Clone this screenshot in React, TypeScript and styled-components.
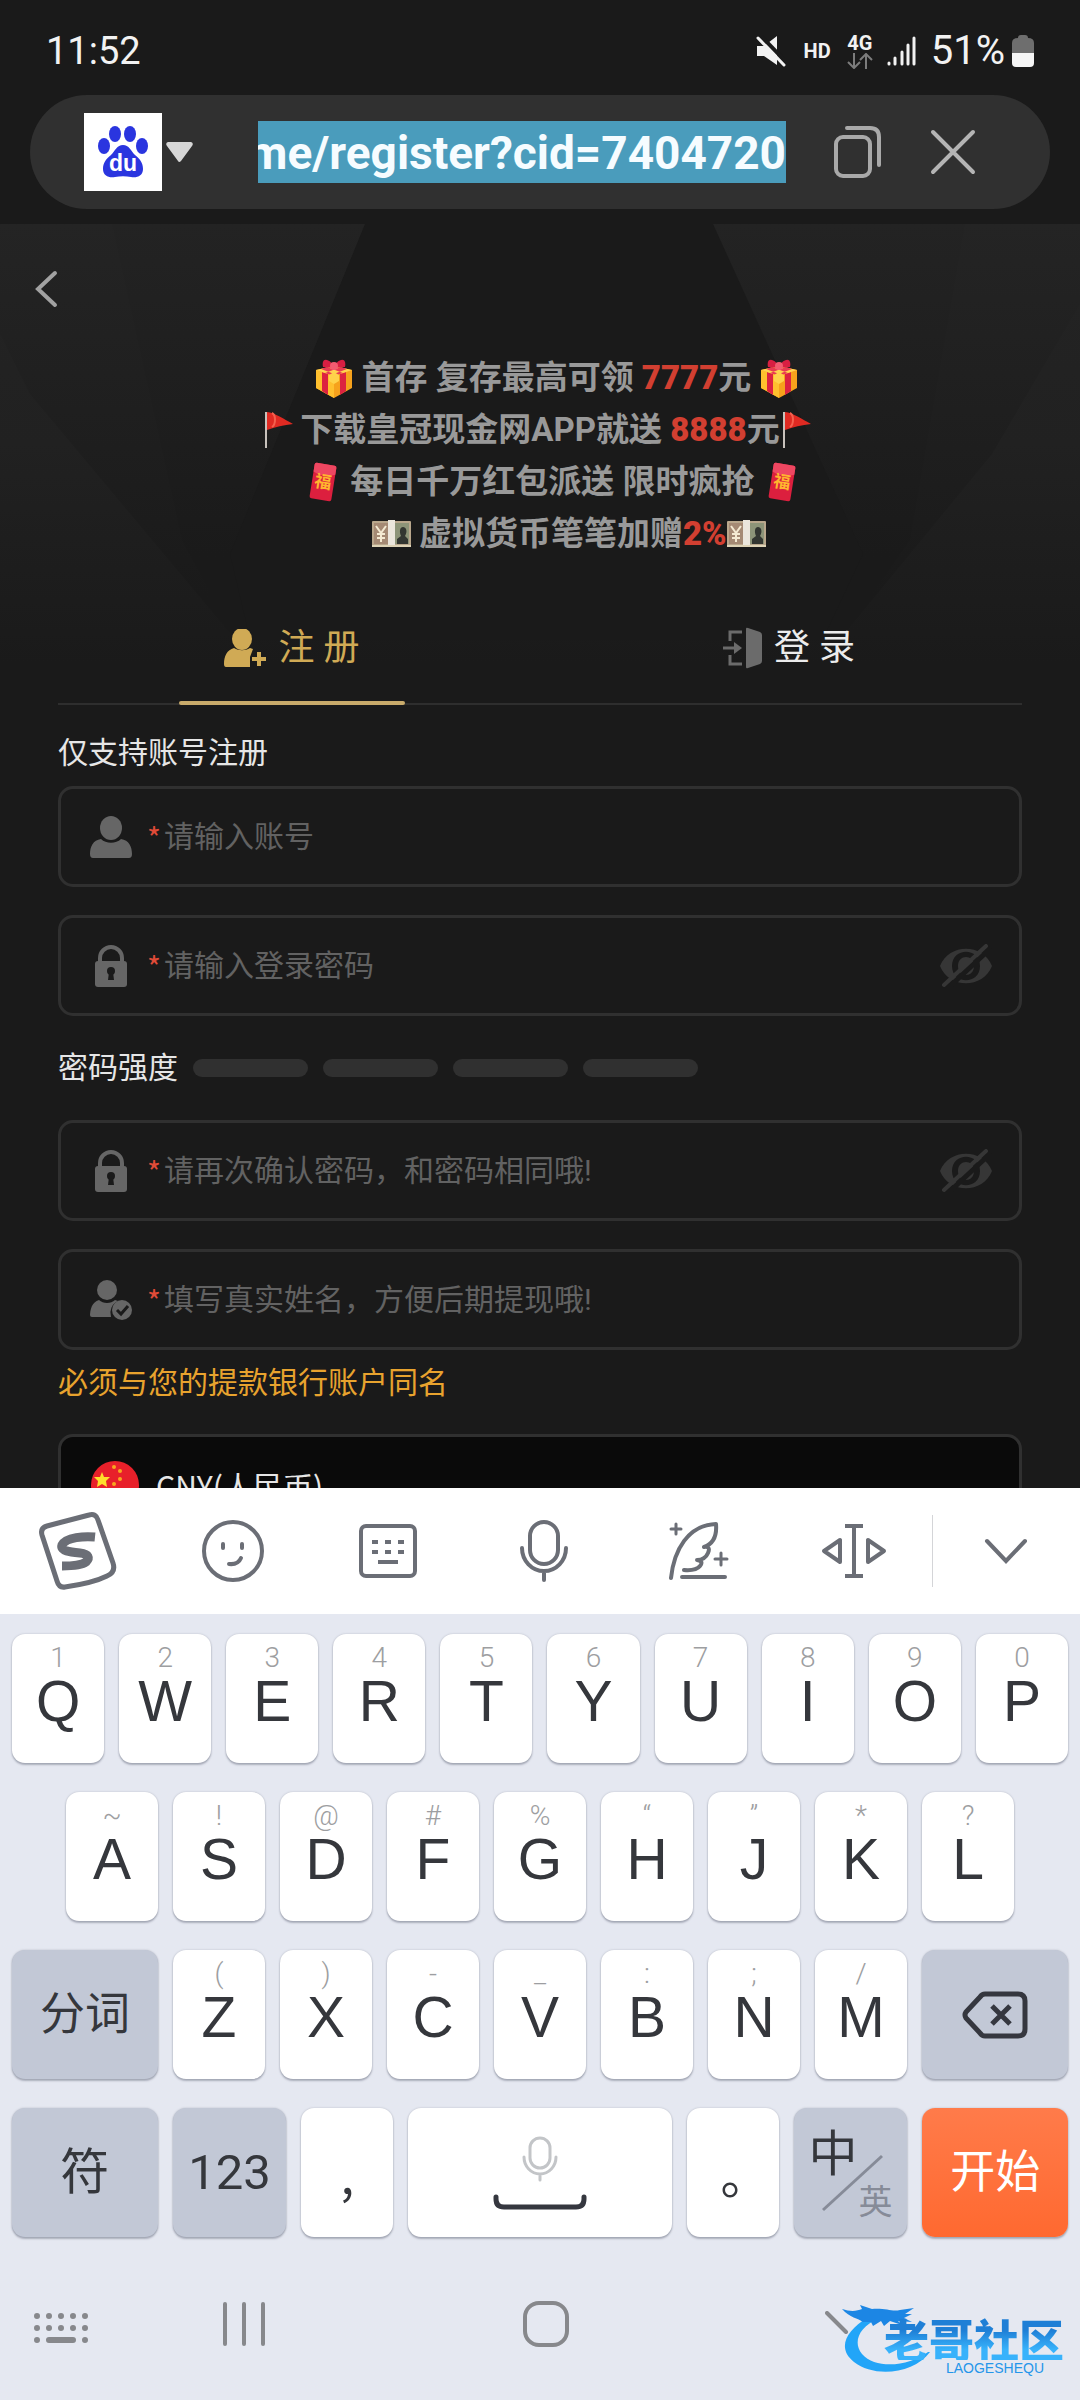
import React from "react";
import styled, { createGlobalStyle } from "styled-components";

const GlobalStyle = createGlobalStyle`
  * { box-sizing: border-box; }
  html, body { margin: 0; background: #1a1a1a; }
  button, input, select { font: inherit; color: inherit; border: 0; padding: 0; margin: 0; background: none; outline: none; }
  svg { display: block; flex: none; }
`;

const Screen = styled.div`
  display: flex;
  flex-direction: column;
  height: 100vh;
  background: #1a1a1a;
  color: #e6e6e6;
  font-family: Roboto, "Noto Sans CJK SC", sans-serif;
  overflow: hidden;
`;

/* ---------- status bar ---------- */

const StatusBar = styled.header`
  display: flex;
  align-items: center;
  justify-content: space-between;
  height: 95px;
  padding: 6px 46px 0 46px;
  font-size: 38px;
  line-height: 48px;
  color: #f2f2f2;
`;

const StatusIcons = styled.div`
  display: flex;
  align-items: center;
`;

const HdMark = styled.span`
  margin: 0 16px 0 18px;
  font-size: 20px;
  font-weight: 700;
  line-height: 24px;
`;

const Network = styled.span`
  display: flex;
  flex-direction: column;
  align-items: center;
  margin-right: 14px;
  font-size: 20px;
  font-weight: 700;
  line-height: 20px;
`;

const Percent = styled.span`
  margin: 0 7px 0 14px;
  font-size: 40px;
`;

/* ---------- address bar ---------- */

const AddressBar = styled.div`
  display: flex;
  align-items: center;
  height: 114px;
  margin: 0 30px 15px;
  padding: 0 74px 0 54px;
  border-radius: 57px;
  background: #303030;
`;

const EngineButton = styled.button`
  display: flex;
  align-items: center;
  gap: 4px;
`;

const EngineLogo = styled.span`
  display: grid;
  place-items: center;
  width: 78px;
  height: 78px;
  background: #fff;
`;

const UrlClip = styled.div`
  display: flex;
  justify-content: flex-end;
  flex: 1;
  min-width: 0;
  height: 62px;
  margin: 0 47px 0 65px;
  overflow: hidden;
  background: #4a9cbc;
`;

const UrlInput = styled.input`
  flex: none;
  field-sizing: content;
  padding-top: 2px;
  font-size: 46px;
  font-weight: 700;
  line-height: 60px;
  color: #f6fcff;
`;

const BarButton = styled.button`
  display: grid;
  place-items: center;
  & + & { margin-left: 48px; }
`;

/* ---------- web page ---------- */

const Page = styled.main`
  position: relative;
  flex: 1;
  min-height: 0;
  overflow: hidden;
`;

const Backdrop = styled.svg`
  position: absolute;
  top: 0;
  left: 0;
  width: 100%;
  height: 440px;
`;

const PageContent = styled.div`
  position: relative;
  padding-top: 40px;
`;

const BackButton = styled.button`
  display: flex;
  align-items: center;
  height: 50px;
  padding: 0 34px;
`;

const Banner = styled.section`
  margin: 38px 0 29px;
  font-size: 33px;
  font-weight: 700;
  line-height: 52px;
  color: #999;
`;

const BannerLine = styled.p`
  display: flex;
  align-items: center;
  justify-content: center;
  height: 52px;
  margin: 0;
  white-space: pre;
`;

const Amount = styled.strong`
  color: #d23f31;
`;

const Form = styled.form`
  padding: 0 58px;
`;

const Tabs = styled.div`
  display: grid;
  grid-template-columns: 1fr 1fr;
  column-gap: 30px;
  height: 116px;
  border-bottom: 2px solid #2e2e2e;
`;

const Tab = styled.button<{ $active?: boolean }>`
  position: relative;
  display: flex;
  align-items: center;
  justify-content: center;
  gap: 12px;
  padding-top: 4px;
  font-size: 36px;
  line-height: 48px;
  color: ${(p) => (p.$active ? "#d0aa55" : "#ececec")};
  &::after {
    content: "";
    position: absolute;
    left: 50%;
    bottom: -2px;
    width: 226px;
    height: 4px;
    margin-left: -113px;
    border-radius: 2px;
    background: ${(p) => (p.$active ? "#c9ab6b" : "transparent")};
  }
`;

const FormTitle = styled.p`
  margin: 28px 0 13px;
  font-size: 30px;
  line-height: 40px;
`;

const Field = styled.div<{ $filled?: boolean }>`
  display: flex;
  align-items: center;
  height: 101px;
  padding: 0 26px 0 29px;
  border: 3px solid #303030;
  border-radius: 15px;
  background: ${(p) => (p.$filled ? "#0a0a0a" : "transparent")};
  font-size: 30px;
  line-height: 40px;
  & + & { margin-top: 28px; }
`;

const FieldLabel = styled.label`
  display: flex;
  align-items: center;
  gap: 15px;
`;

const Required = styled.span`
  width: 17px;
  font-family: "Noto Sans CJK SC", sans-serif;
  color: #e04b38;
`;

const FieldInput = styled.input`
  flex: 1;
  min-width: 0;
  height: 60px;
  &::placeholder { color: #626262; opacity: 1; }
`;

const CurrencySelect = styled.select`
  flex: 1;
  appearance: none;
  height: 60px;
  margin-left: 16px;
  font-family: "Noto Sans CJK SC", sans-serif;
`;

const Strength = styled.div`
  display: flex;
  align-items: center;
  gap: 15px;
  height: 104px;
  font-size: 30px;
  line-height: 40px;
`;

const StrengthBar = styled.span`
  width: 115px;
  height: 18px;
  border-radius: 9px;
  background: #303030;
`;

const Notice = styled.p`
  margin: 13px 0 31px;
  font-size: 30px;
  line-height: 40px;
  color: #e8a32e;
`;

/* ---------- keyboard ---------- */

const Keyboard = styled.section`
  flex: none;
  background: #e5e8f1;
  color: #35373c;
`;

const Toolbar = styled.div`
  display: grid;
  grid-template-columns: repeat(6, 155fr) 148fr;
  height: 126px;
  background: #fff;
`;

const ToolButton = styled.button<{ $divided?: boolean }>`
  display: flex;
  align-items: center;
  justify-content: center;
  color: #6b6e76;
  &::before {
    content: "";
    display: ${(p) => (p.$divided ? "block" : "none")};
    width: 1px;
    height: 72px;
    margin-right: auto;
    background: #d4d5d8;
  }
  & > svg { margin-right: ${(p) => (p.$divided ? "auto" : "0")}; }
`;

const Keys = styled.div`
  display: grid;
  row-gap: 29px;
  padding: 20px 12px 0;
`;

const KeyRow = styled.div<{ $inset?: boolean }>`
  display: flex;
  gap: 15px;
  padding: ${(p) => (p.$inset ? "0 54px" : "0")};
`;

const tones = {
  light: "#fff",
  grey: "#c2c8d6",
  orange: "linear-gradient(#ff7b4a, #ff6930)",
};

const Key = styled.button<{ $grow?: number; $tone?: keyof typeof tones }>`
  display: flex;
  flex-direction: column;
  align-items: center;
  justify-content: center;
  flex: ${(p) => p.$grow ?? 92} 1 0;
  min-width: 0;
  height: 129px;
  border-radius: 13px;
  background: ${(p) => tones[p.$tone ?? "light"]};
  box-shadow: 0 0 2px rgba(70, 75, 95, 0.3), 0 2px 2px rgba(70, 75, 95, 0.35);
  color: ${(p) => (p.$tone === "orange" ? "#fff" : "#35373c")};
  font-size: 45px;
  line-height: 60px;
`;

const Hint = styled.span`
  height: 32px;
  font-size: 28px;
  font-weight: 300;
  line-height: 32px;
  color: #9d9ea1;
`;

const Letter = styled.span`
  margin-bottom: 28px;
  font-family: "Liberation Sans", Arial, sans-serif;
  font-size: 57px;
  line-height: 54px;
`;

const BigText = styled.span`
  font-size: 49px;
`;

const Punct = styled.span`
  font-family: "Noto Sans CJK SC", sans-serif;
  font-size: 49px;
  font-feature-settings: "halt";
`;

const Language = styled.span`
  position: relative;
  display: flex;
  align-items: flex-end;
  justify-content: space-between;
  width: 84px;
  height: 94px;
  & > svg { position: absolute; left: 14px; top: 28px; }
`;

const Chinese = styled.span`
  align-self: flex-start;
  font-size: 49px;
  line-height: 58px;
`;

const English = styled.span`
  font-size: 34px;
  line-height: 36px;
  color: #868b98;
`;

const NavBar = styled.nav`
  position: relative;
  display: grid;
  grid-template-columns: 93fr 302fr 302fr 302fr 81fr;
  align-items: center;
  padding: 64px 0 53px;
`;

const NavButton = styled.button<{ $start?: boolean }>`
  display: flex;
  align-items: center;
  justify-content: ${(p) => (p.$start ? "flex-start" : "center")};
  height: 46px;
  padding-left: ${(p) => (p.$start ? "34px" : "0")};
  color: #87888c;
`;

const Watermark = styled.div`
  position: absolute;
  right: 16px;
  bottom: 24px;
  width: 222px;
  height: 72px;
  color: #2596ea;
  & > svg { position: absolute; left: 0; top: 0; }
`;

const WatermarkText = styled.div`
  position: relative;
  display: flex;
  flex-direction: column;
  align-items: flex-end;
  padding-top: 14px;
`;

const WatermarkName = styled.span`
  font-family: "Noto Sans CJK SC", sans-serif;
  font-size: 45px;
  font-weight: 900;
  line-height: 42px;
  background: linear-gradient(#1f7fd6 30%, #38b2fb 75%);
  background-clip: text;
  color: transparent;
`;

const WatermarkLatin = styled.span`
  margin-right: 20px;
  font-family: "Liberation Sans", Arial, sans-serif;
  font-size: 14px;
  line-height: 16px;
`;

/* ---------- drawings ---------- */

const Gift = () => (
  <svg width="38" height="40" viewBox="0 0 38 40">
    <path d="M1 12L19 8l18 4v18L19 40 1 30z" fill="#f6a21c" />
    <path d="M1 12l18 6v22L1 30z" fill="#ffc02e" />
    <path d="M7 14l6 2v21l-6-4zM25 16l6-2v19l-6 4z" fill="#dc2340" />
    <path d="M1 12L19 8l18 4-18 6z" fill="#ffd350" />
    <path d="M6 11l6-2 16 6-6 2zM32 11l-6-2-16 6 6 2z" fill="#e93a52" />
    <path d="M19 8C13-1 6 0 8 9l11 1zM19 8c6-9 13-8 11 1l-11 1z" fill="#d81f42" />
    <circle cx="19" cy="8" r="4" fill="#f25b70" />
    <path d="M19 14l5 3v6l-5 3-5-3v-6z" fill="#ffd24a" />
  </svg>
);

const Flag = () => (
  <svg width="38" height="40" viewBox="0 0 38 40">
    <path d="M4 2v36" stroke="#c8c2bc" strokeWidth="2" />
    <path d="M5 2c8 1 17 7 26 12-9 1-18 3-26 6z" fill="#e02a22" />
    <path d="M10 3c4 2 4 11 0 14" stroke="#f4604e" strokeWidth="2" fill="none" />
  </svg>
);

const Envelope = () => (
  <svg width="38" height="40" viewBox="0 0 38 40">
    <g transform="rotate(9 19 20)">
      <rect x="8" y="2" width="22" height="36" rx="2" fill="#dc1f3e" />
      <path d="M8 4q0-2 2-2h18q2 0 2 2v7q-11 5-22 0z" fill="#ee4761" />
      <text x="19" y="26" textAnchor="middle" fontSize="17" fontWeight="700" fill="#ffb52e" fontFamily="Noto Sans CJK SC">福</text>
    </g>
  </svg>
);

const Money = () => (
  <svg width="39" height="40" viewBox="0 0 39 40">
    <rect x="0" y="7" width="39" height="26" rx="1" fill="#b9a78c" />
    <rect x="2" y="9" width="14" height="21" fill="#a58a74" />
    <path d="M4 12l5 7 5-7M9 19v9M5 20h8M5 24h8" stroke="#f4ead2" strokeWidth="2" fill="none" />
    <rect x="23" y="9" width="14" height="21" fill="#8d9478" />
    <path d="M25 30v-5l4-3c-2-5-1-9 2-9s5 4 2 9l3 3v5z" fill="#333631" />
    <rect x="16" y="6" width="7" height="27" fill="#ebe6dc" />
    <path d="M0 32h39" stroke="#ded3b6" strokeWidth="2" />
  </svg>
);

const UserIcon = () => (
  <svg width="42" height="42" viewBox="0 0 42 42" fill="#666">
    <ellipse cx="21" cy="12" rx="11" ry="12" />
    <path d="M0 38c0-7 3-14 11-15 5 5 15 5 20 0 8 1 11 8 11 15q0 4-3 4H3q-3 0-3-4z" />
  </svg>
);

const LockIcon = () => (
  <svg width="42" height="42" viewBox="0 0 42 42">
    <path d="M10 17v-4a11 11 0 0 1 22 0v4" fill="none" stroke="#666" strokeWidth="4" />
    <rect x="5" y="16" width="32" height="26" rx="3" fill="#666" />
    <circle cx="21" cy="26" r="4" fill="#1a1a1a" />
    <path d="M19 27h4l1 8h-6z" fill="#1a1a1a" />
  </svg>
);

const UserCheckIcon = () => (
  <svg width="42" height="42" viewBox="0 0 42 42">
    <g fill="#666">
      <ellipse cx="17" cy="11" rx="10" ry="10" />
      <path d="M0 38c0-8 2-15 9-17 4 4 12 4 16 0l3 1a13 13 0 0 0-7 16H2q-2 0-2-2z" />
      <circle cx="32" cy="31" r="10" />
    </g>
    <path d="M27 31l4 4 7-8" stroke="#1a1a1a" strokeWidth="3" fill="none" />
  </svg>
);

const EyeOffIcon = () => (
  <svg width="54" height="44" viewBox="0 0 54 44">
    <path
      fill="#363636"
      fillRule="evenodd"
      d="M1 22C10-1 44-1 53 22 44 45 10 45 1 22zm12 0c0 19 28 19 28 0S13 3 13 22zm6 0c0-12 16-12 16 0s-16 12-16 0z"
    />
    <path d="M9 44L52 4" stroke="#1a1a1a" strokeWidth="5" />
    <path d="M5 41L47 2" stroke="#363636" strokeWidth="4" strokeLinecap="round" />
  </svg>
);

const ChinaFlag = () => (
  <svg width="50" height="50" viewBox="0 0 50 50">
    <circle cx="25" cy="25" r="24" fill="#e8202a" />
    <path d="M12 12l2 5h6l-4 4 1 6-5-3-5 3 1-6-4-4h6z" fill="#ffdf2b" />
    <g fill="#f7a61f">
      <circle cx="24" cy="7" r="2" />
      <circle cx="30" cy="11" r="2" />
      <circle cx="30" cy="19" r="2" />
      <circle cx="24" cy="24" r="2" />
    </g>
  </svg>
);

const MicIcon = ({ width, height, stroke }: { width: number; height: number; stroke: string }) => (
  <svg width={width} height={height} viewBox="0 0 50 62" fill="none" stroke={stroke} strokeWidth="4" strokeLinecap="round">
    <rect x="11" y="2" width="28" height="42" rx="14" />
    <path d="M3 28a22 23 0 0 0 44 0M25 51v9" />
  </svg>
);

/* ---------- data ---------- */

const topRow = ["1Q", "2W", "3E", "4R", "5T", "6Y", "7U", "8I", "9O", "0P"];
const middleRow = ["~A", "!S", "@D", "#F", "%G", "“H", "”J", "*K", "?L"];
const bottomRow = ["(Z", ")X", "-C", "_V", ":B", ";N", "/M"];

const LetterKeys = ({ pairs }: { pairs: string[] }) => (
  <>
    {pairs.map(([hint, letter]) => (
      <Key type="button" key={letter}>
        <Hint>{hint}</Hint>
        <Letter>{letter}</Letter>
      </Key>
    ))}
  </>
);

type TextFieldProps = {
  id: string;
  icon: React.ReactNode;
  placeholder: string;
  secret?: boolean;
};

const TextField = ({ id, icon, placeholder, secret }: TextFieldProps) => (
  <Field>
    <FieldLabel htmlFor={id} aria-label={placeholder}>
      {icon}
      <Required>*</Required>
    </FieldLabel>
    <FieldInput id={id} type={secret ? "password" : "text"} placeholder={placeholder} />
    {secret && (
      <button type="button" aria-label="显示密码">
        <EyeOffIcon />
      </button>
    )}
  </Field>
);

export default function App() {
  return (
    <Screen>
      <GlobalStyle />
      <StatusBar>
        <time>11:52</time>
        <StatusIcons>
          <svg width="30" height="32" viewBox="0 0 30 32">
            <path d="M1 11h7L21 1v29L8 21H1z" fill="#f2f2f2" />
            <path d="M4 0l28 29" stroke="#1a1a1a" strokeWidth="4" />
            <path d="M2 3l26 27" stroke="#f2f2f2" strokeWidth="3" strokeLinecap="round" />
          </svg>
          <HdMark>HD</HdMark>
          <Network>
            4G
            <svg width="26" height="16" viewBox="0 0 26 16" fill="none" stroke="#7c7c7c" strokeWidth="2">
              <path d="M7 0v14M1 9l6 6 6-6M19 16V2M13 7l6-6 6 6" />
            </svg>
          </Network>
          <svg width="30" height="30" viewBox="0 0 30 30" stroke="#f2f2f2" strokeWidth="3" strokeLinecap="round">
            <path d="M2 27v1M8 22v6M15 16v12M21 9v19M27 2v26" />
          </svg>
          <Percent>51%</Percent>
          <svg width="22" height="32" viewBox="0 0 22 32">
            <path d="M6 3q0-3 3-3h4q3 0 3 3 6 0 6 5v10H0V8q0-5 6-5z" fill="#6e6e6e" />
            <path d="M0 18h22v10q0 4-4 4H4q-4 0-4-4z" fill="#f5f5f5" />
          </svg>
        </StatusIcons>
      </StatusBar>

      <AddressBar>
        <EngineButton type="button" aria-label="搜索引擎">
          <EngineLogo>
            <svg width="50" height="52" viewBox="0 0 50 52" fill="#2a35df">
              <ellipse cx="17" cy="8" rx="6" ry="8" />
              <ellipse cx="32" cy="8" rx="6" ry="8" />
              <ellipse cx="6" cy="20" rx="6" ry="8" />
              <ellipse cx="44" cy="20" rx="6" ry="8" />
              <path d="M25 19c6 0 8 6 12 10 5 4 8 8 8 14 0 7-6 9-12 8-5-1-11-1-16 0-6 1-12-1-12-8 0-6 3-10 8-14 4-4 6-10 12-10z" />
              <text x="25" y="45" textAnchor="middle" fontSize="23" fontWeight="700" fill="#fff" fontFamily="Liberation Sans">du</text>
            </svg>
          </EngineLogo>
          <svg width="27" height="20" viewBox="0 0 27 20">
            <path d="M2 0h23q3 1 1 4L15 19q-2 2-3 0L1 4Q-1 1 2 0z" fill="#d6d6d6" />
          </svg>
        </EngineButton>
        <UrlClip>
          <UrlInput aria-label="网址" readOnly value="me/register?cid=7404720" />
        </UrlClip>
        <BarButton type="button" aria-label="标签页">
          <svg width="49" height="54" viewBox="0 0 49 54" fill="none" stroke="#a9a9a9" strokeWidth="4" strokeLinecap="round">
            <rect x="3" y="12" width="34" height="39" rx="7" />
            <path d="M14 3h23q9 0 9 9v28" />
          </svg>
        </BarButton>
        <BarButton type="button" aria-label="关闭">
          <svg width="46" height="46" viewBox="0 0 46 46" stroke="#b4b4b4" strokeWidth="4" strokeLinecap="round">
            <path d="M3 3l40 40M43 3L3 43" />
          </svg>
        </BarButton>
      </AddressBar>

      <Page>
        <Backdrop viewBox="0 0 1080 440" preserveAspectRatio="none" aria-hidden="true">
          <defs>
            <linearGradient id="fade" x1="0" y1="0" x2="0" y2="1">
              <stop offset="0" stopColor="#242424" />
              <stop offset="0.5" stopColor="#212121" />
              <stop offset="1" stopColor="#1a1a1a" />
            </linearGradient>
            <linearGradient id="outer" x1="0" y1="0" x2="0" y2="1">
              <stop offset="0" stopColor="#242424" />
              <stop offset="0.9" stopColor="#1a1a1a" />
            </linearGradient>
            <linearGradient id="inner" x1="0" y1="0" x2="0" y2="1">
              <stop offset="0" stopColor="#232323" />
              <stop offset="0.8" stopColor="#1a1a1a" />
            </linearGradient>
          </defs>
          <path d="M0 0h1080v440H0z" fill="url(#fade)" />
          <path d="M0 0v110l30 60 205 245h605l152-185 88-150V0z" fill="url(#outer)" />
          <path d="M112 0l70 316 53 100h605l70-100 55-316z" fill="url(#inner)" />
          <path d="M365 0h348l150 330-40 85H250l-20-85z" fill="#1a1a1a" />
        </Backdrop>
        <PageContent>
          <BackButton type="button" aria-label="返回">
            <svg width="24" height="38" viewBox="0 0 24 38" fill="none" stroke="#a2a2a2" strokeWidth="4" strokeLinecap="round">
              <path d="M21 3L4 19l17 16" />
            </svg>
          </BackButton>

          <Banner>
            <BannerLine>
              {"\u00a0\u00a0\u00a0\u00a0"}
              <Gift /> 首存 复存最高可领 <Amount>7777</Amount>元 <Gift />
            </BannerLine>
            <BannerLine>
              <Flag />下载皇冠现金网APP就送 <Amount>8888</Amount>元<Flag />
            </BannerLine>
            <BannerLine>
              {"\u00a0\u00a0\u00a0"}
              <Envelope /> 每日千万红包派送 限时疯抢 <Envelope />
            </BannerLine>
            <BannerLine>
              {"\u00a0\u00a0\u00a0\u00a0\u00a0\u00a0\u00a0"}
              <Money /> 虚拟货币笔笔加赠<Amount>2%</Amount>
              <Money />
            </BannerLine>
          </Banner>

          <Form>
            <Tabs role="tablist">
              <Tab type="button" role="tab" aria-selected="true" $active>
                <svg width="43" height="38" viewBox="0 0 43 38" fill="#d0aa55">
                  <ellipse cx="18" cy="10" rx="10" ry="11" />
                  <path d="M0 35c0-8 3-14 10-16 5 3 11 3 16 0l3 1-3 8v10H2q-2 0-2-3z" />
                  <path d="M35 23v14M28 30h14" stroke="#d0aa55" strokeWidth="4" />
                </svg>
                注 册
              </Tab>
              <Tab type="button" role="tab" aria-selected="false">
                <svg width="40" height="42" viewBox="0 0 40 42" fill="#6b6b6b">
                  <path d="M24 2q0-2 2-1l12 4q2 1 2 3v26q0 2-2 3l-12 4q-2 1-2-1z" />
                  <path d="M20 5H8v9M20 37H8v-9" fill="none" stroke="#6b6b6b" strokeWidth="3" />
                  <path d="M1 21h12" stroke="#6b6b6b" strokeWidth="3" />
                  <path d="M12 15l8 6-8 6z" />
                </svg>
                登 录
              </Tab>
            </Tabs>
            <FormTitle>仅支持账号注册</FormTitle>
            <TextField id="account" icon={<UserIcon />} placeholder="请输入账号" />
            <TextField id="password" icon={<LockIcon />} placeholder="请输入登录密码" secret />
            <Strength>
              <span>密码强度</span>
              <StrengthBar />
              <StrengthBar />
              <StrengthBar />
              <StrengthBar />
            </Strength>
            <TextField id="confirm" icon={<LockIcon />} placeholder="请再次确认密码，和密码相同哦!" secret />
            <TextField id="realname" icon={<UserCheckIcon />} placeholder="填写真实姓名，方便后期提现哦!" />
            <Notice>必须与您的提款银行账户同名</Notice>
            <Field $filled>
              <label htmlFor="currency" aria-label="币种">
                <ChinaFlag />
              </label>
              <CurrencySelect id="currency">
                <option>CNY(人民币)</option>
              </CurrencySelect>
            </Field>
          </Form>
        </PageContent>
      </Page>

      <Keyboard>
        <Toolbar>
          <ToolButton type="button" aria-label="搜狗输入法">
            <svg width="78" height="78" viewBox="0 0 78 78">
              <path
                d="M8 14L50 3q7-2 9 5l15 43q3 9-6 13-14 7-42 11-6 1-8-6L3 23q-2-7 5-9z"
                fill="none"
                stroke="#6b6e76"
                strokeWidth="5"
              />
              <path
                d="M56 25C46 24 27 25 23 33c-2 6 8 7 18 8 9 1 10 5 6 9-4 3-12 4-24 4"
                fill="none"
                stroke="#6b6e76"
                strokeWidth="9"
              />
            </svg>
          </ToolButton>
          <ToolButton type="button" aria-label="表情">
            <svg width="62" height="62" viewBox="0 0 62 62" fill="none" stroke="currentColor" strokeWidth="4" strokeLinecap="round">
              <circle cx="31" cy="31" r="29" />
              <path d="M21 24v4M40 24v4M27 44q9 1 12-6" />
            </svg>
          </ToolButton>
          <ToolButton type="button" aria-label="键盘">
            <svg width="60" height="56" viewBox="0 0 60 56" fill="none" stroke="currentColor" strokeWidth="4">
              <rect x="3" y="3" width="54" height="50" rx="5" />
              <path d="M14 19h6M27 19h6M40 19h6M14 29h6M27 29h6M40 29h6M20 39h20" />
            </svg>
          </ToolButton>
          <ToolButton type="button" aria-label="语音">
            <MicIcon width={50} height={62} stroke="#6b6e76" />
          </ToolButton>
          <ToolButton type="button" aria-label="妙笔">
            <svg width="62" height="62" viewBox="0 0 62 62" fill="none" stroke="currentColor" strokeWidth="4" strokeLinejoin="round" strokeLinecap="round">
              <path d="M3 58C6 30 20 5 48 4c1 12-3 20-12 23q7-1 4 6-3 7-11 7 7 1 3 6-4 5-16 4M14 57h43" />
              <path d="M8 4v10M3 9h10M53 33v12M47 39h12" strokeWidth="3" />
            </svg>
          </ToolButton>
          <ToolButton type="button" aria-label="光标">
            <svg width="66" height="58" viewBox="0 0 66 58" fill="none" stroke="currentColor" strokeWidth="4" strokeLinejoin="round">
              <path d="M33 4v50M24 4h18M24 54h18" />
              <path d="M3 29l16-11v22zM63 29L47 18v22z" />
            </svg>
          </ToolButton>
          <ToolButton type="button" aria-label="收起" $divided>
            <svg width="44" height="26" viewBox="0 0 44 26" fill="none" stroke="currentColor" strokeWidth="4" strokeLinecap="round">
              <path d="M3 3l19 20L41 3" />
            </svg>
          </ToolButton>
        </Toolbar>

        <Keys>
          <KeyRow>
            <LetterKeys pairs={topRow} />
          </KeyRow>
          <KeyRow $inset>
            <LetterKeys pairs={middleRow} />
          </KeyRow>
          <KeyRow>
            <Key type="button" $grow={146} $tone="grey">分词</Key>
            <LetterKeys pairs={bottomRow} />
            <Key type="button" $grow={146} $tone="grey" aria-label="删除">
              <svg width="66" height="48" viewBox="0 0 66 48" fill="none" stroke="#35373f" strokeWidth="5" strokeLinejoin="round">
                <path d="M23 3h33q7 0 7 7v28q0 7-7 7H23q-3 0-5-3L4 27q-2-3 0-6L18 6q2-3 5-3z" />
                <path d="M30 15l18 18M48 15L30 33" />
              </svg>
            </Key>
          </KeyRow>
          <KeyRow>
            <Key type="button" $grow={146} $tone="grey"><BigText>符</BigText></Key>
            <Key type="button" $grow={114} $tone="grey"><BigText>123</BigText></Key>
            <Key type="button"><Punct>,</Punct></Key>
            <Key type="button" $grow={264} aria-label="空格">
              <svg width="94" height="74" viewBox="0 0 94 74" fill="none" strokeLinecap="round">
                <g stroke="#c3c5c8" strokeWidth="3">
                  <rect x="37" y="2" width="20" height="30" rx="10" />
                  <path d="M31 21a16 17 0 0 0 32 0M47 38v6" />
                </g>
                <path d="M3 61v2q0 8 8 8h72q8 0 8-8v-2" stroke="#35373f" strokeWidth="5" />
              </svg>
            </Key>
            <Key type="button"><Punct>。</Punct></Key>
            <Key type="button" $grow={114} $tone="grey">
              <Language>
                <Chinese>中</Chinese>
                <svg width="62" height="58" viewBox="0 0 62 58" stroke="#868b98" strokeWidth="3">
                  <path d="M1 56L60 2" />
                </svg>
                <English>英</English>
              </Language>
            </Key>
            <Key type="button" $grow={146} $tone="orange">开始</Key>
          </KeyRow>
        </Keys>

        <NavBar>
          <NavButton type="button" aria-label="切换键盘" $start>
            <svg width="54" height="46" viewBox="0 0 54 46" fill="none" stroke="currentColor" strokeWidth="6" strokeLinecap="round">
              <path d="M3 15h0M15 15h0M27 15h0M39 15h0M51 15h0M3 27h0M15 27h0M27 27h0M39 27h0M51 27h0M3 39h0M15 39h24M51 39h0" />
            </svg>
          </NavButton>
          <NavButton type="button" aria-label="最近">
            <svg width="44" height="46" viewBox="0 0 44 46" stroke="currentColor" strokeWidth="4" strokeLinecap="round">
              <path d="M3 3v40M22 3v40M41 3v40" />
            </svg>
          </NavButton>
          <NavButton type="button" aria-label="主页">
            <svg width="46" height="46" viewBox="0 0 46 46" fill="none" stroke="currentColor" strokeWidth="4">
              <rect x="2" y="2" width="42" height="42" rx="14" />
            </svg>
          </NavButton>
          <NavButton type="button" aria-label="返回">
            <svg width="46" height="26" viewBox="0 0 46 26" fill="none" stroke="currentColor" strokeWidth="4" strokeLinecap="round">
              <path d="M2 2l19 19" />
            </svg>
          </NavButton>
          <Watermark>
            <svg width="100" height="72" viewBox="0 0 100 72">
              <path d="M25 14C5 26-6 44 12 58c20 16 60 12 76-10l-2 0C68 62 34 66 20 50 10 38 18 22 36 15z" fill="#22a5f8" />
              <path d="M0 5c9 3 15 2 20 0l-2-4 12 4c14-1 20 3 28 1l14-2-9 6 7 0-8 4 8 4-14-1 4 4-12-4-6 5-3-5-8 5-2-4-8 0C16 14 8 14 0 5z" fill="#1c86e4" />
            </svg>
            <WatermarkText>
              <WatermarkName>老哥社区</WatermarkName>
              <WatermarkLatin>LAOGESHEQU</WatermarkLatin>
            </WatermarkText>
          </Watermark>
        </NavBar>
      </Keyboard>
    </Screen>
  );
}
